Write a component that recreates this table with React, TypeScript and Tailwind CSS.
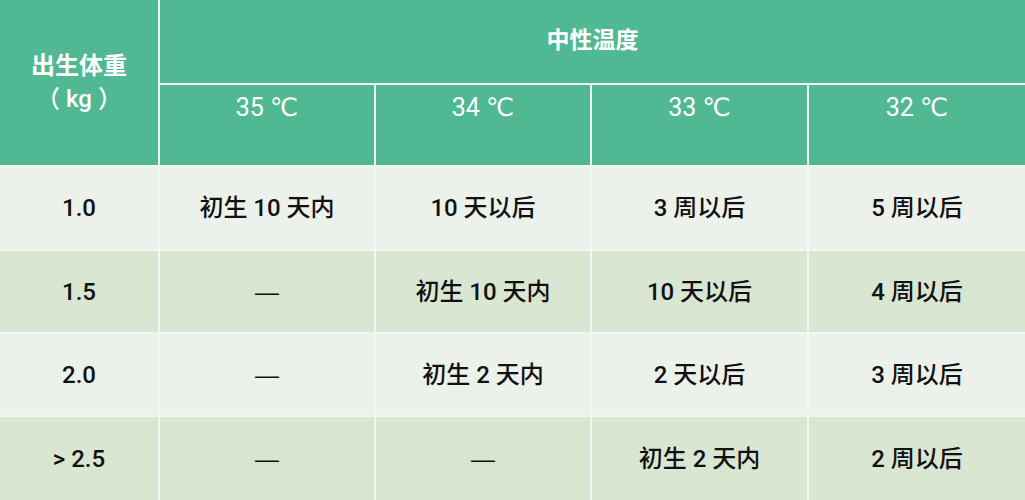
const temps = ["35", "34", "33", "32"];

const rows = [
  { weight: "1.0", cells: ["初生 10 天内", "10 天以后", "3 周以后", "5 周以后"] },
  { weight: "1.5", cells: ["—", "初生 10 天内", "10 天以后", "4 周以后"] },
  { weight: "2.0", cells: ["—", "初生 2 天内", "2 天以后", "3 周以后"] },
  { weight: "> 2.5", cells: ["—", "—", "初生 2 天内", "2 周以后"] },
];

export default function App() {
  return (
    <div
      className="h-[500px] w-[1025px] overflow-hidden bg-[#f3f7f1]"
      style={{ fontFamily: 'Roboto, "Noto Sans CJK SC", sans-serif' }}
    >
      <div className="grid h-full grid-cols-[158px_214px_214px_215px_216px] grid-rows-[83px_80px_82px_81px_81px_83px] gap-[2px]">
        <div className="row-span-2 flex flex-col items-center justify-center bg-[#50b993] text-[24px] font-bold leading-[33px] text-white">
          <span>出生体重</span>
          <span className="font-medium">（ kg ）</span>
        </div>
        <div className="col-span-4 flex items-center justify-center bg-[#50b993] text-[23px] font-bold text-white">
          中性温度
        </div>
        {temps.map((t) => (
          <div
            key={t}
            className="flex items-start justify-center bg-[#50b993] pt-[8px] text-[25px] leading-[30px] text-white"
          >
            {t}&nbsp;<span className="font-['DejaVu_Sans'] text-[25px]">℃</span>
          </div>
        ))}
        {rows.map((row, i) => {
          const bg = i % 2 === 0 ? "bg-[#edf1eb]" : "bg-[#d9e6d2]";
          return [row.weight, ...row.cells].map((c, j) => (
            <div
              key={`${i}-${j}`}
              className={`flex items-center justify-center text-[24px] font-medium text-[#111] ${bg}`}
            >
              {c === "—" ? <span className="font-['Liberation_Sans'] font-normal">—</span> : c}
            </div>
          ));
        })}
      </div>
    </div>
  );
}
